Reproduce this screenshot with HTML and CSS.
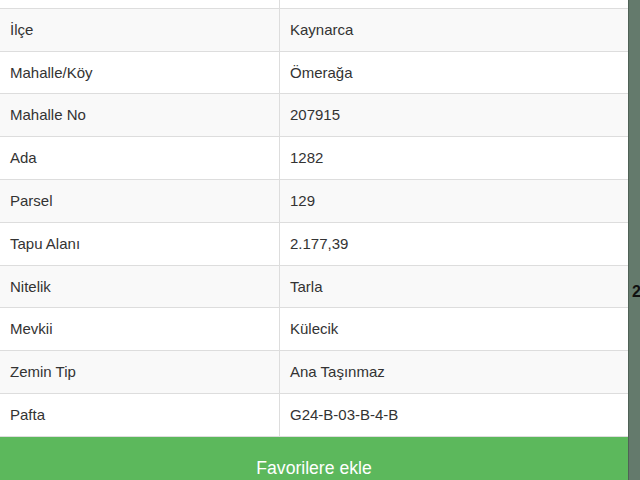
FILE: index.html
```html
<!DOCTYPE html>
<html lang="tr">
<head>
    <meta charset="UTF-8">
    <title>Parsel Bilgileri</title>
    <link rel="stylesheet" href="styles.css">
</head>
<body>
<div class="backdrop-label">2</div>
<div class="panel">
    <table class="parcel-table">
        <tr><td>&nbsp;</td><td>&nbsp;</td></tr>
        <tr><td>İlçe</td><td>Kaynarca</td></tr>
        <tr><td>Mahalle/Köy</td><td>Ömerağa</td></tr>
        <tr><td>Mahalle No</td><td>207915</td></tr>
        <tr><td>Ada</td><td>1282</td></tr>
        <tr><td>Parsel</td><td>129</td></tr>
        <tr><td>Tapu Alanı</td><td>2.177,39</td></tr>
        <tr><td>Nitelik</td><td>Tarla</td></tr>
        <tr><td>Mevkii</td><td>Külecik</td></tr>
        <tr><td>Zemin Tip</td><td>Ana Taşınmaz</td></tr>
        <tr><td>Pafta</td><td>G24-B-03-B-4-B</td></tr>
    </table>
    <button class="button-fav" type="button">Favorilere ekle</button>
</div>
</body>
</html>
```

FILE: styles.css
```css
html, body {
    margin: 0;
    height: 100%;
    overflow: hidden;
}

body {
    font-family: "Liberation Sans", Arial, sans-serif;
    background-color: #647a6c;
    color: #333;
}

.panel {
    width: 629px;
    height: 100%;
    background-color: #fff;
    border-right: 1px solid #4f6156;
    box-sizing: border-box;
    overflow: hidden;
}

.parcel-table {
    width: 629px;
    margin-top: -35px;
    border-collapse: collapse;
    font-size: 15px;
    line-height: 21.8px;
    table-layout: fixed;
}

.parcel-table td {
    padding: 10px;
    border: 1px solid #ddd;
    text-align: left;
}

.parcel-table td:first-child {
    width: 259px;
    border-left: none;
}

.parcel-table td:last-child {
    border-right: none;
}

.parcel-table tr:nth-child(even) {
    background-color: #f9f9f9;
}

.button-fav {
    display: block;
    width: 100%;
    margin: 0;
    border: none;
    background-color: #5cb85c;
    color: #fff;
    font-family: "Liberation Sans", Arial, sans-serif;
    font-size: 17.6px;
    line-height: 24px;
    padding: 19px 0;
    text-align: center;
}

.backdrop-label {
    position: absolute;
    left: 632px;
    top: 283px;
    font-size: 16px;
    font-weight: bold;
    color: #111;
}
```
